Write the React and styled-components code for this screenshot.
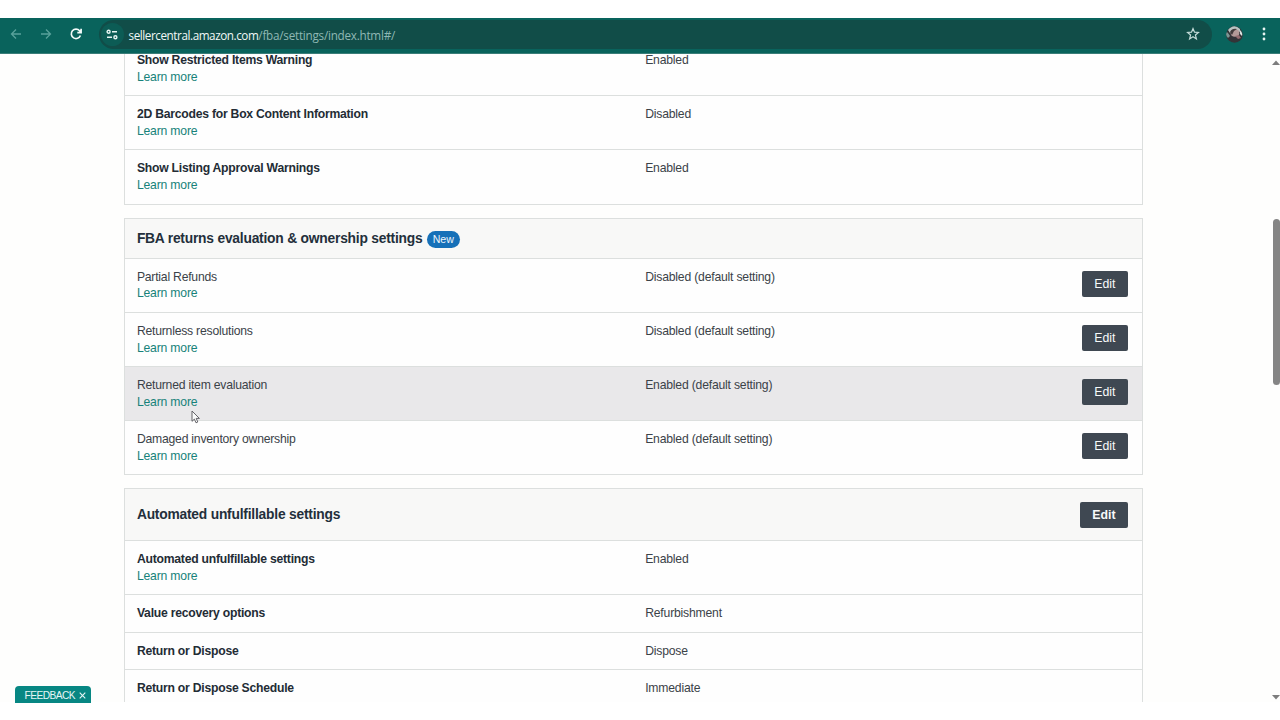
import React from 'react'
import styled, { createGlobalStyle } from 'styled-components'

const GlobalStyle = createGlobalStyle`
	* {
		box-sizing: border-box;
	}
	body {
		margin: 0;
		background: #fff;
		font-family: "Liberation Sans", Arial, sans-serif;
		color: #2b333b;
	}
`

const Screen = styled.div`
	position: relative;
	display: flex;
	flex-direction: column;
	width: 1280px;
	height: 720px;
	padding: 18px 0;
	overflow: hidden;
`

const Toolbar = styled.header`
	display: flex;
	align-items: center;
	flex: none;
	height: 36px;
	padding: 0 9px 3px 8.5px;
	background: #09635c;
	border-bottom: 1px solid #3a7d78;
`

const NavIcon = styled.svg`
	flex: none;
	width: 14px;
	height: 14px;
	margin-right: 16px;
	fill: none;
	stroke: ${props => (props.$active ? '#f3fbfa' : '#58a19a')};
	stroke-width: ${props => (props.$active ? 1.7 : 1.3)};
`

const AddressBar = styled.div`
	display: flex;
	align-items: center;
	width: 1113px;
	height: 29px;
	padding: 0 11.5px 0 2px;
	border-radius: 15px;
	background: #114d48;
`

const SiteInfo = styled.span`
	display: flex;
	align-items: center;
	justify-content: center;
	width: 23px;
	height: 23px;
	margin-right: 5px;
	border-radius: 50%;
	background: #0c5c55;
`

const Url = styled.span`
	flex: 1;
	font-family: "Open Sans", "Noto Sans", sans-serif;
	font-size: 11.7px;
	line-height: 16px;
	letter-spacing: -0.24px;
	color: #8fb8b4;
	padding-top: 2px;
`

const Host = styled.span`
	color: #f0f8f7;
	letter-spacing: -0.43px;
`

const Avatar = styled.svg`
	flex: none;
	width: 17px;
	height: 17px;
	margin: 0 0 0 14.5px;
`

const MenuDots = styled.svg`
	flex: none;
	width: 4px;
	height: 14px;
	margin-left: 19px;
`

const Page = styled.div`
	display: flex;
	justify-content: space-between;
	height: 648.5px;
	overflow: hidden;
	background: #fefefd;
`

const Panels = styled.main`
	width: 1018.5px;
	margin: -13.9px 0 0 124.4px;
	flex: none;
`

const Panel = styled.section`
	margin-bottom: 13.2px;
	border: 1px solid #dcdfde;
	background: #fefefe;
`

const PanelHeader = styled.div`
	display: flex;
	align-items: center;
	height: ${props => props.$height};
	padding: 0 14px 0 11.5px;
	background: #f8f8f7;
`

const Title = styled.h2`
	margin: 1px 0 0;
	font-size: 13.8px;
	line-height: 18px;
	letter-spacing: -0.21px;
	color: #232f3b;
`

const NewBadge = styled.span`
	width: 33.5px;
	height: 17px;
	margin: 2px 0 0 4px;
	border-radius: 9px;
	background: #1670b8;
	color: #eef6fc;
	font-size: 10.6px;
	line-height: 17px;
	text-align: center;
`

const Row = styled.div`
	display: grid;
	grid-template-columns: 508.3px 1fr auto;
	height: ${props => (props.$short ? '37.5px' : '54.15px')};
	padding: 10px 14px 0 11.5px;
	border-top: 1px solid ${props => (props.$first ? 'transparent' : '#dcdfde')};
	background: ${props => (props.$hovered ? '#e9e8ea' : 'transparent')};
	font-size: 12.2px;
	line-height: 16.7px;
`

const Name = styled.div`
	font-weight: ${props => (props.$bold ? 'bold' : 'normal')};
	letter-spacing: ${props => (props.$bold ? '-0.24px' : '-0.22px')};
	color: ${props => (props.$bold ? '#232c35' : '#3b4248')};
`

const LearnMore = styled.a`
	display: block;
	font-weight: normal;
	letter-spacing: -0.18px;
	color: #17827a;
`

const Value = styled.div`
	letter-spacing: -0.2px;
	color: #3b4248;
`

const EditButton = styled.button`
	width: ${props => (props.$bold ? '48px' : '46px')};
	height: 26px;
	margin: ${props => (props.$bold ? '0 0 0 auto' : '2.1px 0 0')};
	padding: 0;
	border: 0;
	border-radius: 2px;
	background: #3f4852;
	color: #f7f9fa;
	font-family: inherit;
	font-size: 12.3px;
	font-weight: ${props => (props.$bold ? 'bold' : 'normal')};
`

const Scrollbar = styled.div`
	display: flex;
	flex-direction: column;
	align-items: center;
	width: 8px;
	padding: 6px 0 2px;
`

const Thumb = styled.div`
	width: 7.5px;
	height: 166px;
	margin: 154px 0 auto 0.5px;
	border-radius: 4px;
	background: #858585;
`

const Arrow = styled.svg`
	flex: none;
	width: 8px;
	height: 5px;
	fill: #7d7d7d;
`

const Feedback = styled.div`
	position: absolute;
	left: 14.5px;
	top: 686px;
	display: flex;
	align-items: center;
	width: 76.5px;
	height: 16.5px;
	padding: 3px 0 0 10px;
	border-radius: 4px 4px 0 0;
	background: #078783;
	color: #e6f6f5;
	font-size: 10.2px;
	letter-spacing: -0.55px;
	line-height: 12px;

	svg {
		margin-left: 3.5px;
	}
`

const Cursor = styled.svg`
	position: absolute;
	left: 191px;
	top: 410px;
	width: 9px;
	height: 14px;
`

const warnings = [
	{ name: 'Show Restricted Items Warning', value: 'Enabled', link: true, bold: true },
	{ name: '2D Barcodes for Box Content Information', value: 'Disabled', link: true, bold: true },
	{ name: 'Show Listing Approval Warnings', value: 'Enabled', link: true, bold: true }
]

const returns = [
	{ name: 'Partial Refunds', value: 'Disabled (default setting)', link: true, edit: true },
	{ name: 'Returnless resolutions', value: 'Disabled (default setting)', link: true, edit: true },
	{ name: 'Returned item evaluation', value: 'Enabled (default setting)', link: true, edit: true, hovered: true },
	{ name: 'Damaged inventory ownership', value: 'Enabled (default setting)', link: true, edit: true }
]

const unfulfillable = [
	{ name: 'Automated unfulfillable settings', value: 'Enabled', link: true, bold: true },
	{ name: 'Value recovery options', value: 'Refurbishment', bold: true },
	{ name: 'Return or Dispose', value: 'Dispose', bold: true },
	{ name: 'Return or Dispose Schedule', value: 'Immediate', bold: true }
]

const Rows = ({ items, hideFirstLine }) => items.map((item, i) => (
	<Row key={item.name} $short={!item.link} $hovered={item.hovered} $first={hideFirstLine && i === 0}>
		<Name $bold={item.bold}>
			{item.name}
			{item.link && <LearnMore>Learn more</LearnMore>}
		</Name>
		<Value>{item.value}</Value>
		{item.edit && <EditButton>Edit</EditButton>}
	</Row>
))

const BrowserBar = () => (
	<Toolbar>
		<NavIcon viewBox="0 0 14 14"><path d="M12 7H2.5M7 2.5L2.5 7L7 11.5" /></NavIcon>
		<NavIcon viewBox="0 0 14 14"><path d="M2 7h9.5M7 2.5L11.5 7L7 11.5" /></NavIcon>
		<NavIcon viewBox="0 0 14 14" $active><path d="M11.4 8.5A4.7 4.7 0 1 1 10.6 3.8L12 5.4M12.1 1.8V5.6H8.3" /></NavIcon>
		<AddressBar>
			<SiteInfo>
				<svg width="12" height="11" viewBox="0 0 12 11" fill="none" stroke="#e6f4f2" strokeWidth="1.4">
					<circle cx="2.6" cy="2.7" r="1.5" />
					<path d="M6 2.7h5M1 8.3h5" />
					<circle cx="9.4" cy="8.3" r="1.5" />
				</svg>
			</SiteInfo>
			<Url><Host>sellercentral.amazon.com</Host>/fba/settings/index.html#/</Url>
			<svg width="14" height="14" viewBox="0 0 14 14" fill="none" stroke="#c3dbd8" strokeWidth="1.2">
				<path d="M7 1.6L8.5 5.2L12.4 5.5L9.4 8L10.4 11.9L7 9.8L3.6 11.9L4.6 8L1.6 5.5L5.5 5.2Z" />
			</svg>
		</AddressBar>
		<Avatar viewBox="0 0 17 17">
			<circle cx="8.5" cy="8.5" r="8.3" fill="#333337" />
			<path d="M2 4Q8-3 14 3L14 6L9 4L4 7Z" fill="#b9c3c2" />
			<path d="M1 6Q3 8 4 10L2 12Q-1 9 1 6Z" fill="#7d9694" />
			<ellipse cx="9" cy="7" rx="4.4" ry="3.7" fill="#b49a98" />
			<path d="M4 6Q6 2 11 3L8 5L6 9Z" fill="#433b3c" />
			<path d="M9 10L13 9L15 12L12 13Z" fill="#966c70" />
			<path d="M14 4Q17 7 16 10L14 8Z" fill="#dce3e1" />
		</Avatar>
		<MenuDots viewBox="0 0 4 14" fill="#e8f4f2">
			<circle cx="2" cy="2" r="1.4" />
			<circle cx="2" cy="7" r="1.4" />
			<circle cx="2" cy="12" r="1.4" />
		</MenuDots>
	</Toolbar>
)

const App = () => (
	<>
		<GlobalStyle />
		<Screen>
			<BrowserBar />
			<Page>
				<Panels>
					<Panel>
						<Rows items={warnings} hideFirstLine />
					</Panel>
					<Panel>
						<PanelHeader $height="39px">
							<Title>FBA returns evaluation &amp; ownership settings</Title>
							<NewBadge>New</NewBadge>
						</PanelHeader>
						<Rows items={returns} />
					</Panel>
					<Panel>
						<PanelHeader $height="50.5px">
							<Title>Automated unfulfillable settings</Title>
							<EditButton $bold>Edit</EditButton>
						</PanelHeader>
						<Rows items={unfulfillable} />
					</Panel>
				</Panels>
				<Scrollbar>
					<Arrow viewBox="0 0 8 5"><path d="M0 5L4 0.5L8 5Z" /></Arrow>
					<Thumb />
					<Arrow viewBox="0 0 8 5"><path d="M0 0L4 4.5L8 0Z" /></Arrow>
				</Scrollbar>
			</Page>
			<Feedback>
				FEEDBACK
				<svg width="7" height="7" viewBox="0 0 7 7" stroke="#e6f6f5" strokeWidth="1.1">
					<path d="M0.7 0.7L6.3 6.3M6.3 0.7L0.7 6.3" />
				</svg>
			</Feedback>
			<Cursor viewBox="0 0 9 14">
				<path d="M1 1V11.3L3.4 9.1L5 12.8L6.8 12L5.2 8.4H8.4Z" fill="#fafafa" stroke="#55555a" strokeWidth="0.9" />
			</Cursor>
		</Screen>
	</>
)

export default App
